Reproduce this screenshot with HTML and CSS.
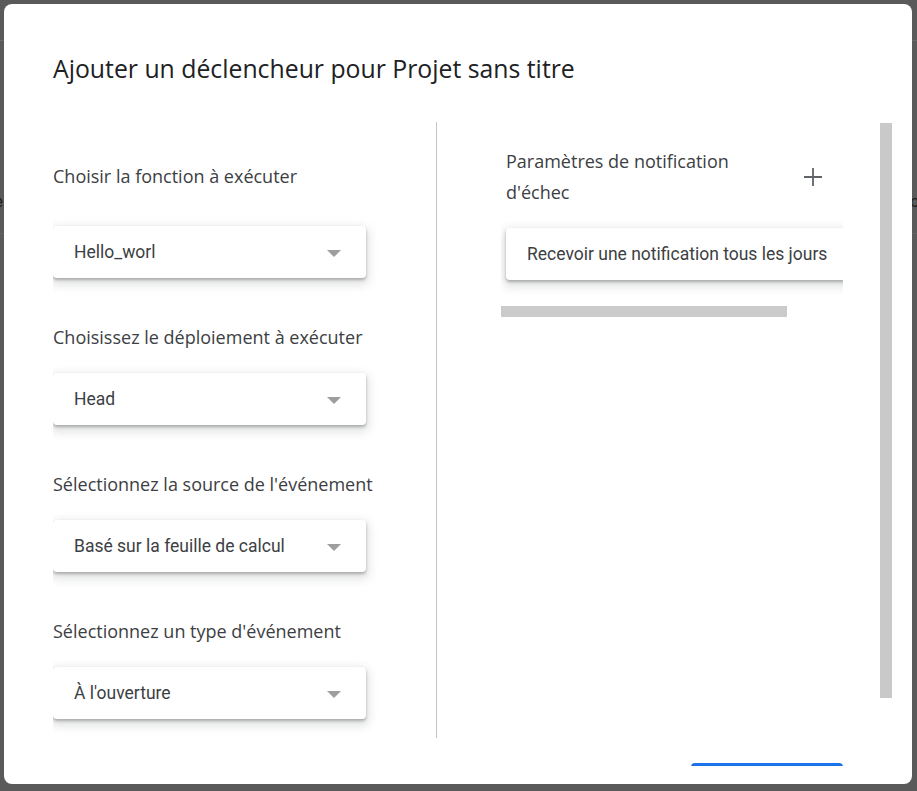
FILE: index.html
```html
<!DOCTYPE html>
<html lang="fr">
<head>
<meta charset="utf-8">
<title>Ajouter un déclencheur</title>
<link rel="stylesheet" href="styles.css">
</head>
<body>
<div class="backdrop">
  <span class="peek peek-left">e</span>
  <span class="peek peek-right">o</span>
</div>
<div class="dialog">
  <h1 class="title">Ajouter un déclencheur pour Projet sans titre</h1>
  <div class="body">
    <div class="columns">
      <div class="left">
        <div class="label label-first">Choisir la fonction à exécuter</div>
        <div class="select"><span>Hello_worl</span><span class="arrow"></span></div>
        <div class="label">Choisissez le déploiement à exécuter</div>
        <div class="select"><span>Head</span><span class="arrow"></span></div>
        <div class="label">Sélectionnez la source de l'événement</div>
        <div class="select"><span>Basé sur la feuille de calcul</span><span class="arrow"></span></div>
        <div class="label">Sélectionnez un type d'événement</div>
        <div class="select"><span>À l'ouverture</span><span class="arrow"></span></div>
      </div>
      <div class="divider"></div>
      <div class="right">
        <div class="scroller">
          <div class="notif-head">
            <div class="notif-title">Paramètres de notification d'échec</div>
            <svg class="plus" width="18" height="18" viewBox="0 0 18 18"><path d="M9 0v18M0 9h18" stroke="#5f6368" stroke-width="1.8" fill="none"/></svg>
          </div>
          <div class="card">Recevoir une notification tous les jours</div>
          <div class="hbar"></div>
        </div>
      </div>
      <div class="vbar"></div>
    </div>
    <div class="footer">
      <button class="save">Enregistrer</button>
    </div>
  </div>
</div>
</body>
</html>
```
FILE: styles.css
```css
html, body {
  margin: 0;
  padding: 0;
}
body {
  width: 917px;
  height: 791px;
  overflow: hidden;
  background: #5a5a5a;
  position: relative;
  font-family: Roboto, "Liberation Sans", sans-serif;
}
.backdrop {
  position: absolute;
  inset: 0;
  background:
    linear-gradient(#6a6a6a, #6a6a6a) 0 40px / 100% 1px no-repeat,
    linear-gradient(#646464, #646464) 0 233px / 100% 1px no-repeat,
    #5a5a5a;
}
.peek {
  position: absolute;
  top: 191px;
  font-size: 17px;
  color: #222;
  font-family: Roboto, sans-serif;
}
.peek-left { left: -6px; }
.peek-right { left: 910px; }
.dialog {
  position: absolute;
  left: 4px;
  top: 4px;
  width: 908px;
  height: 780px;
  box-sizing: border-box;
  padding: 50px 20px 18px 49px;
  background: #fff;
  border-radius: 8px;
  overflow: hidden;
}
.title {
  margin: 0;
  height: 28px;
  line-height: 28px;
  font-family: "Open Sans", sans-serif;
  font-weight: 400;
  font-size: 24.8px;
  color: #202124;
  white-space: nowrap;
}
.body {
  margin-top: 40px;
  height: 644px;
  overflow: hidden;
}
.columns {
  display: flex;
  height: 616px;
}
.left {
  width: 383px;
  padding-top: 42px;
  box-sizing: border-box;
}
.label {
  height: 24px;
  line-height: 24px;
  font-family: "Open Sans", sans-serif;
  font-size: 18px;
  color: #3c4043;
  margin: 47px 0 24px;
  white-space: nowrap;
}
.label-first {
  margin-top: 0;
  margin-bottom: 38px;
}
.select {
  width: 313px;
  height: 52px;
  box-sizing: border-box;
  padding: 0 25px 0 21px;
  display: flex;
  align-items: center;
  justify-content: space-between;
  border-radius: 4px;
  background: #fff;
  box-shadow: 0 2px 3px 0 rgba(60,64,67,.35), 0 4px 10px 3px rgba(60,64,67,.15);
  font-size: 17.5px;
  color: #3c4043;
}
.arrow {
  width: 0;
  height: 0;
  border-left: 7px solid transparent;
  border-right: 7px solid transparent;
  border-top: 7px solid #9e9e9e;
  margin-top: 2px;
}
.divider {
  width: 1px;
  background: #c4c4c4;
}
.right {
  width: 406px;
  padding-left: 64px;
  box-sizing: border-box;
}
.scroller {
  width: 342px;
  overflow: hidden;
  padding-top: 24px;
  padding-bottom: 12px;
}
.notif-head {
  display: flex;
  align-items: center;
  justify-content: space-between;
  margin-left: 5px;
  padding-right: 21px;
}
.notif-title {
  width: 260px;
  font-family: "Open Sans", sans-serif;
  font-size: 18px;
  line-height: 31px;
  color: #3c4043;
}
.plus {
  display: block;
}
.card {
  margin: 20px 0 0 5px;
  width: 360px;
  height: 52px;
  box-sizing: border-box;
  padding-left: 21px;
  display: flex;
  align-items: center;
  border-radius: 4px 0 0 4px;
  background: #fff;
  box-shadow: 0 2px 3px 0 rgba(60,64,67,.35), 0 4px 10px 3px rgba(60,64,67,.15);
  font-size: 17.5px;
  color: #3c4043;
  white-space: nowrap;
}
.hbar {
  margin-top: 26px;
  width: 286px;
  height: 11px;
  background: #cbcbcb;
}
.vbar {
  margin: 1px 0 0 37px;
  width: 12px;
  height: 575px;
  background: #c9c9c9;
}
.footer {
  display: flex;
  justify-content: flex-end;
  padding-right: 49px;
  margin-top: 25px;
}
.save {
  width: 152px;
  height: 36px;
  border: none;
  border-radius: 4px;
  background: #1a73e8;
  color: #fff;
  font-size: 14px;
}
```
